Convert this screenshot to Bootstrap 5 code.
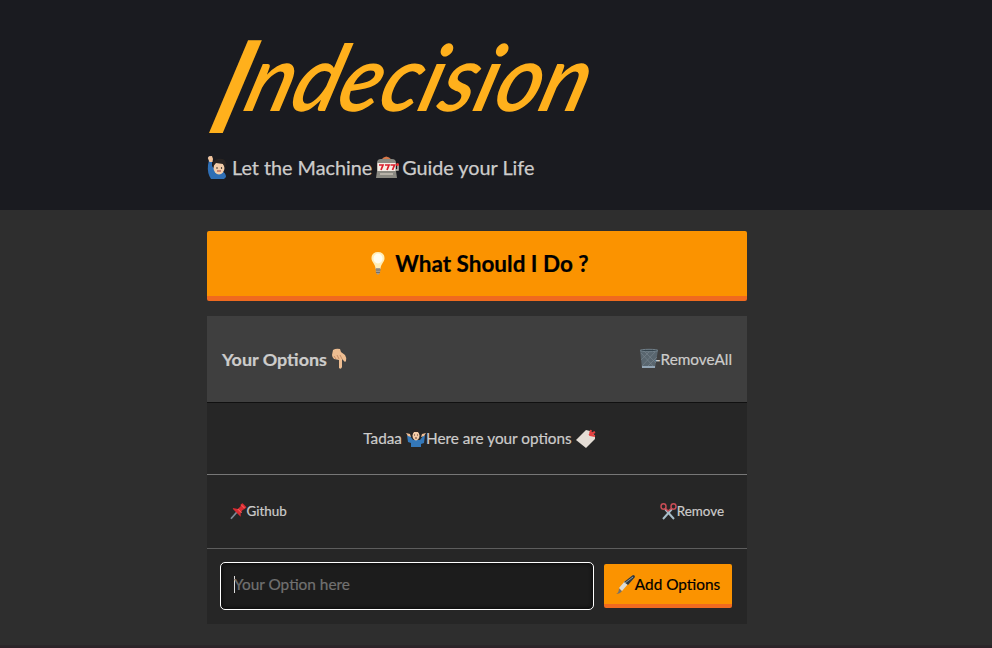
<!DOCTYPE html>
<html lang="en">
<head>
<meta charset="utf-8">
<meta name="viewport" content="width=device-width, initial-scale=1">
<title>Indecision</title>
<link href="https://cdn.jsdelivr.net/npm/bootstrap@5.3.0/dist/css/bootstrap.min.css" rel="stylesheet">
<style>
body{font-family:Lato,sans-serif;background:#2e2e2e;color:#cdcccb;height:648px;overflow:hidden;line-height:1.5}
.page-col{width:540px;margin-left:207px}
.page-end{height:3px;margin-top:21px;background:linear-gradient(#2a282a,#2c2228)}
.hero{height:210px;background:#1a1b20}
.brand{height:150px;padding:26px 0 0 4px;color:#ffb01c;line-height:100px;font-size:92px;font-weight:600;font-style:italic;white-space:nowrap;transform-origin:0 110px;transform:skewX(-17deg) scaleX(.94)}
.brand .initial{font-size:129px;line-height:0;vertical-align:-22px;margin-right:-3px}
.tagline{font-size:19.8px;line-height:34px;font-weight:400;-webkit-text-stroke:.25px}
.ico{display:block;flex:none;overflow:visible}
.decide{height:70px;margin-top:21px;background:#fb9300;border:0;border-bottom:5px solid #f06a1f;border-radius:2px;color:#000;font-size:22.5px;font-weight:700;-webkit-text-stroke:.2px}
.panel{margin-top:15px;background:#262626;-webkit-text-stroke:.2px}
.panel-head{height:87px;background:#3f3f3f;border-bottom:1px solid #101010;padding:0 15px}
.panel-head h2{font-size:17.95px;font-weight:700;padding-top:1px}
.remove-all{font-size:15.3px}
.remove-all .ico{margin-right:-4px}
.tada{height:72px;border-bottom:1px solid #777;font-size:15.3px;padding-left:5px}
.option{height:74px;border-bottom:1px solid #5d5d5d;padding:0 23px;font-size:13.4px}
.entry{height:75px;padding:0 15px 1px 13px}
.field{width:374px;height:48px;background:#1c1c1c;border:1.5px solid #fff;border-radius:5px;box-shadow:inset 0 0 3px 2px #111;padding:0 13px 3px;color:#717171;font-size:15.4px}
.caret{width:1px;height:17px;background:#ddd;margin-right:-1px}
.add{width:128px;height:44px;background:#fb9300;border:0;border-bottom:4px solid #f06a1f;border-radius:2px;font-size:15.35px;color:#000;padding-top:1px!important}
</style>
</head>
<body>
<header class="hero">
<div class="page-col">
<h1 class="brand mb-0"><span class="initial">I</span>ndecision</h1>
<div class="tagline d-flex align-items-center">
<svg class="ico" width="21" height="23" viewBox="0 0 21 23"><path d="M1 9 2 4 1 1l3-1 1 3v7l4 5h6q4 2 4 6l-2 2H4Q0 17 1 9" fill="#2f6fb5"/><path d="M2.500 6 .8 2 2 .3 5 0l1 3-.5 3z" fill="#f2c49c"/><ellipse cx="12" cy="12" rx="5.500" ry="6.500" fill="#f3cda9"/><path d="M6 12Q4 4 11 3q8-1 8 5l-1 4-2-4-7-1-2 2z" fill="#292422"/><circle cx="10" cy="12" r=".7"/><circle cx="14.500" cy="12" r=".7"/><path d="M10 15h4" stroke="#a23b36"/></svg>
<span class="ms-1">Let the Machine</span>
<svg class="ico ms-1 me-1" width="22" height="22" viewBox="0 0 22 22"><path d="M5 4Q10-3 16 4z" fill="#d77748"/><path d="M1 7q0-4 4-4h11q4 0 4 4v8l1 7H0l1-7z" fill="#8b8a82"/><path d="M1.500 7h18v8h-18z" fill="#f6eee6"/><path d="M3 9h4l-2 5M9 9h4l-2 5M14.500 9h4l-2 5" stroke="#d91e2c" stroke-width="1.700" fill="none"/><path d="M4 18h13M20 14h2V9" stroke="#c7c1b5" stroke-width="1.500" fill="none"/><circle cx="21.500" cy="8.500" r="1.500" fill="#e33"/></svg>
<span>Guide your Life</span>
</div>
</div>
</header>
<main class="page-col">
<button class="decide btn w-100 p-0 d-flex align-items-center justify-content-center">
<svg class="ico me-2 ms-1" width="18" height="23" viewBox="0 0 18 23"><path d="M9 0C4 0 2.500 3 2.500 6.500S6.500 12 6.500 17h5c0-5 4-7 4-10.500S14 0 9 0" fill="#ffeeb8"/><ellipse cx="9" cy="6.500" rx="4.500" ry="5" fill="#fffdf0"/><path d="M6.500 16h5l-.5 5-2 2-2-2z" fill="#a59d92"/><path d="M7 18h4.500M7 20.500h4" stroke="#6b655e" stroke-width=".8"/></svg>
<span>What Should I Do ?</span>
</button>
<section class="panel">
<div class="panel-head d-flex align-items-center justify-content-between">
<h2 class="mb-0 d-flex align-items-center"><span>Your Options</span>
<svg class="ico ms-1" width="17" height="21" viewBox="0 0 17 21"><path d="M2 1q3-2 7-1l1 3 4 3q2 3 1 6l-1 1-3-3v8q-1 3-3 1v-8l-5-1q-2-2-2-4z" fill="#edbd91"/><path d="m3 7 2 3m1-4 2 4m1-4 2 4" stroke="#bb815d" stroke-width=".8" fill="none"/></svg></h2>
<div class="remove-all d-flex align-items-center">
<svg class="ico" width="20" height="20" viewBox="0 0 20 20"><path d="m1 1 2 18h13l3-18z" fill="#59666f"/><path d="m2 4 13 14M5 2l12 12M16 3 3 17M11 2 2 11M18 8 8 18" stroke="#7b878e" stroke-width=".6"/><ellipse cx="10" cy="1.500" rx="9" ry="1.200" fill="#35434c" stroke="#71808a"/><path d="M3 18h13" stroke="#92a5b5" stroke-width="2"/></svg>
<span>-RemoveAll</span></div>
</div>
<div class="tada d-flex align-items-center justify-content-center">
<span>Tadaa</span>
<svg class="ico ms-1" width="20" height="19" viewBox="0 0 20 19"><path d="m1 6 3 1 3 4h7l3-4 2-1-1 8-3 1v3H5v-4l-3-1z" fill="#3478b9"/><path d="m0 4 4 1 1 3-3-1M20 4l-4 1-1 3 3-1" fill="#efbd94"/><ellipse cx="10" cy="6.500" rx="3.500" ry="5" fill="#f4cba6"/><path d="M6 6q-1-6 4-6t4 6l-2-3H8z" fill="#2b2523"/><path d="M8 6h1m2 0h1M9 9h2" stroke="#59372c"/></svg>
<span>Here are your options</span>
<svg class="ico ms-1" width="20" height="20" viewBox="0 0 20 20"><path d="m0 11 10-10 4 1 5 5v3l-9 9z" fill="#e4ddd5"/><path d="m14 5 1-4m-2 5 6-3m-5 3 5 1" stroke="#e43f3f" stroke-width="2"/></svg>
</div>
<div class="option d-flex align-items-center justify-content-between">
<div class="d-flex align-items-center"><svg class="ico" width="16.500" height="17" viewBox="0 0 17 17"><path d="m1 16 7-8" stroke="#7c8b97" stroke-width="1.800"/><path d="m3 5 5 1 3-3V1l2-1 4 4-2 2-2 1-2 3v4L3 6z" fill="#d92c32"/><path d="m8 6 4 4M12 2l3 3" stroke="#ff6d69"/></svg><span>Github</span></div>
<div class="d-flex align-items-center"><svg class="ico" width="17" height="17" viewBox="0 0 17 17"><path d="m5 6 9 10M12 6 3 16" stroke="#a7bdc8" stroke-width="2"/><g fill="none" stroke="#c84c55" stroke-width="1.500"><ellipse cx="3.500" cy="3.500" rx="2.500" ry="2.700"/><ellipse cx="13.500" cy="3.500" rx="2.500" ry="2.700"/><path d="m5 5 3 3 4-3"/></g></svg><span>Remove</span></div>
</div>
<div class="entry d-flex align-items-center justify-content-between">
<div class="field d-flex align-items-center"><span class="caret"></span><span>Your Option here</span></div>
<button class="add btn p-0 d-flex align-items-center justify-content-center"><svg class="ico" width="19" height="19" viewBox="0 0 19 19"><path d="M0 19q3-1 3-6l3 3q-2 3-6 3" fill="#75716b"/><path d="m3 13 6-7 3 3-6 7z" fill="#dddcd6"/><path d="m8 7 9-7q2 0 2 2l-7 8z" fill="#303940"/><path d="m9 8 8-6" stroke="#8d9da4"/></svg><span>Add Options</span></button>
</div>
</section>
</main>
<div class="page-end"></div>
<script src="https://cdn.jsdelivr.net/npm/bootstrap@5.3.0/dist/js/bootstrap.bundle.min.js"></script>
</body>
</html>
